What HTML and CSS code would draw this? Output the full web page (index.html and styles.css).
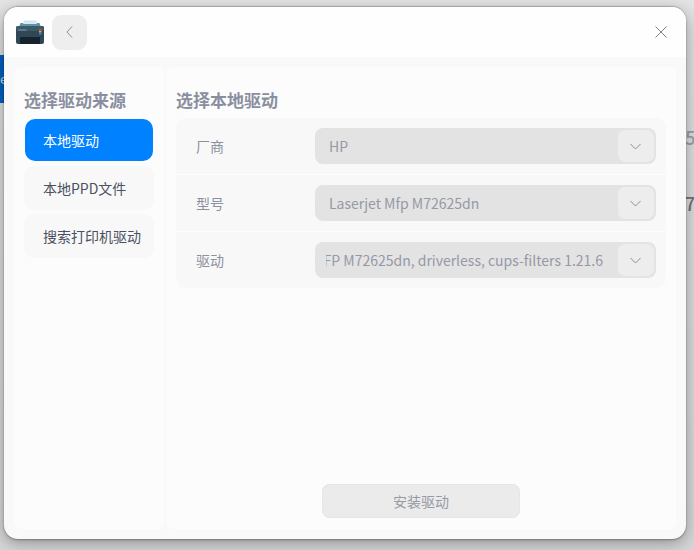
FILE: index.html
```html
<!DOCTYPE html>
<html lang="zh">
<head>
<meta charset="utf-8">
<title>选择驱动来源</title>
<link rel="stylesheet" href="styles.css">
</head>
<body>
<div class="desktop">
  <div class="behind-blue"><span>e</span></div>
  <div class="behind-text t1">25</div>
  <div class="behind-text t2">7</div>
  <div class="window">
    <header class="titlebar">
      <svg class="app-icon" width="30" height="26" viewBox="0 0 30 26">
        <path d="M8 6 L9 1.500 H21 L23 6 Z" fill="#cfe3ee"/>
        <path d="M5.500 4 H24.500 L26 8 H4 Z" fill="#5d93a8"/>
        <path d="M9 3 H21 L22 5 H8 Z" fill="#d9e9f2"/>
        <rect x="1" y="7" width="28" height="18" rx="2" fill="#2f4756"/>
        <rect x="1" y="7" width="28" height="5" rx="2" fill="#3d5a6a"/>
        <rect x="5" y="18" width="20" height="7" fill="#16232c"/>
        <rect x="24" y="10" width="2.500" height="1.500" fill="#d8503c"/>
        <rect x="24" y="12" width="2.500" height="1.500" fill="#e3b23c"/>
        <rect x="24" y="14" width="2.500" height="1.500" fill="#3c86c8"/>
        <rect x="3.500" y="10.500" width="8" height="1" fill="#7e95a3"/>
      </svg>
      <button class="back" aria-label="返回">
        <svg width="10" height="14" viewBox="0 0 10 14"><path d="M7 1.500 L2 7 L7 12.500" fill="none" stroke="#8a8e9a" stroke-width="1"/></svg>
      </button>
      <button class="close" aria-label="关闭">
        <svg width="12" height="12" viewBox="0 0 12 12"><path d="M.5 .5 L11.500 11.500 M11.500 .5 L.5 11.500" fill="none" stroke="#80838d" stroke-width="1"/></svg>
      </button>
    </header>
    <div class="content">
      <aside class="sidebar">
        <h2 class="heading">选择驱动来源</h2>
        <div class="nav-item active">本地驱动</div>
        <div class="nav-item">本地PPD文件</div>
        <div class="nav-item">搜索打印机驱动</div>
      </aside>
      <main class="panel">
        <h2 class="heading">选择本地驱动</h2>
        <div class="group">
          <div class="row">
            <span class="label">厂商</span>
            <div class="combo">
              <span class="value">HP</span>
              <span class="arrow"><svg width="11" height="7" viewBox="0 0 11 7"><path d="M.5 1 L5.500 6 L10.500 1" fill="none" stroke="#8a8e9a" stroke-width="1"/></svg></span>
            </div>
          </div>
          <div class="row">
            <span class="label">型号</span>
            <div class="combo">
              <span class="value">Laserjet Mfp M72625dn</span>
              <span class="arrow"><svg width="11" height="7" viewBox="0 0 11 7"><path d="M.5 1 L5.500 6 L10.500 1" fill="none" stroke="#8a8e9a" stroke-width="1"/></svg></span>
            </div>
          </div>
          <div class="row">
            <span class="label">驱动</span>
            <div class="combo">
              <span class="value scrolled"><span>HP Laserjet MFP M72625dn, driverless, cups-filters 1.21.6</span></span>
              <span class="arrow"><svg width="11" height="7" viewBox="0 0 11 7"><path d="M.5 1 L5.500 6 L10.500 1" fill="none" stroke="#8a8e9a" stroke-width="1"/></svg></span>
            </div>
          </div>
        </div>
        <div class="footer"><button class="install">安装驱动</button></div>
      </main>
    </div>
  </div>
</div>
</body>
</html>
```
FILE: styles.css
```css
* { box-sizing: border-box; }
html, body { margin: 0; height: 100%; }
body { font-family: "Noto Sans CJK SC", "Noto Sans", sans-serif; overflow: hidden; }
.desktop {
  position: relative;
  width: 694px;
  height: 550px;
  padding: 7px 8px 11px 4px;
  background: linear-gradient(#e4e4e4 0, #dedede 40px, #d6d6d6 100%);
}
.behind-blue {
  position: absolute; left: 0; top: 55px; width: 4px; height: 48px;
  background: #0060c0; color: #c9d6e6; font-size: 13px; line-height: 48px; overflow: hidden;
}
.behind-text { position: absolute; font-size: 18px; line-height: 20px; font-weight: 500; color: #6c7079; }
.t1 { top: 127px; left: 675px; color: #9a9ea7; }
.t2 { top: 193px; left: 685px; }
.window {
  position: relative;
  height: 532px;
  border-radius: 14px;
  background: #f9f9f9;
  overflow: hidden;
  box-shadow: 0 -1px 1px rgba(0,0,0,.2), 0 1px 2px rgba(0,0,0,.3), 0 4px 16px rgba(0,0,0,.32);
  display: flex;
  flex-direction: column;
}
.titlebar {
  height: 50px;
  flex: none;
  background: #fefefe;
  display: flex;
  align-items: center;
  padding-left: 11px;
}
.app-icon { margin-right: 7px; flex: none; }
button { font-family: inherit; border: 0; padding: 0; }
.back {
  width: 35px; height: 35px; border-radius: 9px; background: #eeeeef;
  display: flex; align-items: center; justify-content: center;
}
.close {
  margin-left: auto; margin-right: 19px; width: 12px; height: 12px; background: none;
  display: flex;
}
.content { flex: 1; display: flex; gap: 2px; padding: 10px; min-height: 0; }
.sidebar {
  width: 150px; flex: none; background: #fcfcfc; border-radius: 8px;
  padding: 21px 10px 0; display: flex; flex-direction: column; gap: 4px;
}
.heading {
  margin: 0; font-size: 17px; line-height: 24px; font-weight: 700; color: #8a8fa0;
}
.sidebar .heading { margin-bottom: 3px; }
.nav-item {
  height: 44px; border-radius: 10px; background: #f8f8f8; color: #4b5162;
  font-size: 14px; line-height: 44px; padding-left: 19px;
}
.nav-item.active {
  height: 42px; line-height: 42px; margin: 0 1px; padding-left: 18px; background: #0081ff; color: #fff;
  margin-bottom: 1px;
}
.panel {
  flex: 1; background: #fcfcfc; border-radius: 8px; padding: 21px 10px 11px;
  display: flex; flex-direction: column;
}
.panel .heading { margin-bottom: 6px; }
.group { background: #f8f8f8; border-radius: 10px; display: flex; flex-direction: column; }
.row {
  height: 57px; display: flex; align-items: center; padding: 0 10px 0 20px;
  border-bottom: 1px solid #fdfdfd;
}
.row:last-child { border-bottom: 0; height: 56px; }
.label { width: 119px; flex: none; font-size: 14px; color: #8d919f; }
.combo {
  flex: 1; height: 36px; min-width: 0; background: #e3e3e3; border-radius: 8px;
  display: flex; align-items: center; justify-content: space-between; position: relative;
}
.value { font-size: 14px; color: #9599a6; padding-left: 14px; white-space: nowrap; }
.scrolled {
  flex: none; width: 277px; margin-left: 11px; padding: 0; overflow: hidden;
  display: flex; justify-content: flex-end;
}
.scrolled span { flex: none; }
.arrow {
  width: 36px; height: 32px; margin: 2px; padding-right: 2px; background: #ededed; border-radius: 7px;
  display: flex; align-items: center; justify-content: center; flex: none;
}
.footer { margin-top: auto; display: flex; justify-content: center; }
.install {
  width: 198px; height: 34px; border-radius: 8px; background: #ebebeb;
  box-shadow: inset 0 0 0 1px #e6e6e6; color: #969aa5; font-size: 14px;
}
```
